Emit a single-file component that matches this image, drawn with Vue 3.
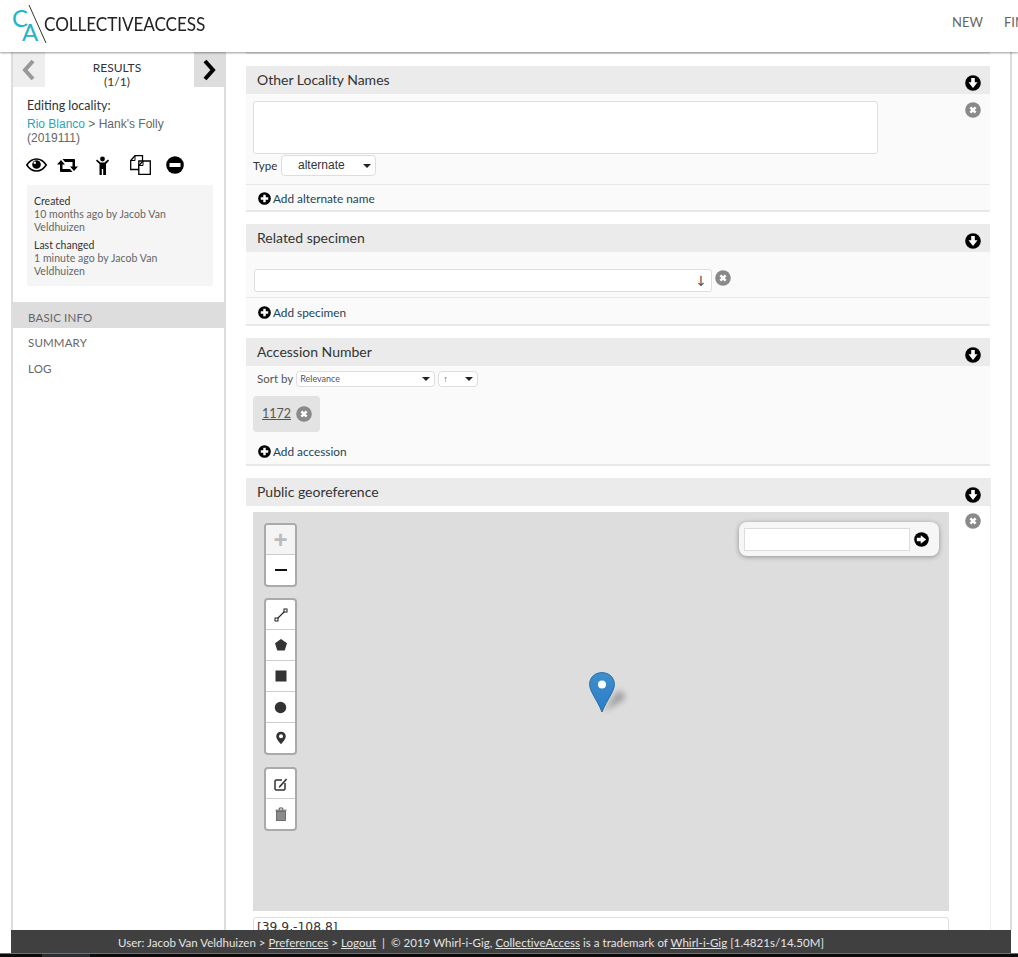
<template>
  <div class="page">
    <svg class="sprite" width="0" height="0">
      <defs>
        <symbol id="i-down" viewBox="0 0 16 16">
          <circle cx="8" cy="8" r="7.8" fill="#000" />
          <path d="M6.200 3h3.600v4.200h2.700L8 13 3.500 7.200h2.700z" fill="#fff" />
        </symbol>
        <symbol id="i-right" viewBox="0 0 16 16">
          <circle cx="8" cy="8" r="7.800" fill="#000" />
          <path d="M3 6.200h4.200V3.500L13 8l-5.800 4.500V9.800H3z" fill="#fff" />
        </symbol>
        <symbol id="i-x" viewBox="0 0 16 16">
          <circle cx="8" cy="8" r="7.800" fill="#8a8a8a" />
          <path d="M5.400 5.400l5.200 5.200M10.600 5.400l-5.200 5.200" stroke="#fff" stroke-width="2.600" fill="none" />
        </symbol>
        <symbol id="i-plus" viewBox="0 0 16 16">
          <circle cx="8" cy="8" r="7.800" fill="#000" />
          <path d="M8 3.400v9.200M3.400 8h9.200" stroke="#fff" stroke-width="3" fill="none" />
        </symbol>
      </defs>
    </svg>

    <header class="topbar">
      <svg class="logo" width="38" height="42" viewBox="0 0 38 42">
        <text x="0" y="22" class="logo-letter">C</text>
        <text x="10" y="36" class="logo-letter">A</text>
        <line x1="17" y1="0" x2="34" y2="38" stroke="#333" stroke-width="1" />
      </svg>
      <span class="brand">COLLECTIVEACCESS</span>
      <nav class="topnav">
        <span>NEW</span>
        <span>FIND</span>
      </nav>
    </header>

    <div class="layout">
      <aside class="sidebar">
        <div class="pager">
          <div class="pager-btn prev">
            <svg width="16" height="22" viewBox="0 0 16 22"><path d="M12 2L4 11l8 9" fill="none" stroke="#999" stroke-width="4" /></svg>
          </div>
          <div class="pager-label">RESULTS<br />(1/1)</div>
          <div class="pager-btn next">
            <svg width="16" height="22" viewBox="0 0 16 22"><path d="M4 2l8 9-8 9" fill="none" stroke="#000" stroke-width="4" /></svg>
          </div>
        </div>

        <div class="editing">
          <div class="editing-title">Editing locality:</div>
          <div class="editing-path"><a>Rio Blanco</a> &gt; Hank's Folly (2019111)</div>
        </div>

        <div class="tools">
          <svg width="21" height="14" viewBox="0 0 21 14">
            <path d="M.8 7C3.400 3 6.600 1 10.500 1s7.100 2 9.700 6c-2.600 4-5.800 6-9.700 6S3.400 11 .8 7z" fill="none" stroke="#000" stroke-width="1.500" />
            <circle cx="10.500" cy="6.500" r="4.300" fill="#000" />
            <circle cx="8.800" cy="4.800" r="1.200" fill="#fff" />
          </svg>
          <svg class="tool-retweet" width="21" height="15" viewBox="0 0 21 15">
            <path d="M4 2l4 4.500H5.500V11H13l2.500 3H4c-.6 0-1-.4-1-1V6.500H0zM17 13l-4-4.500h2.500V4H8L5.500 1H17c.6 0 1 .4 1 1v6.500h3z" fill="#000" />
          </svg>
          <svg class="tool-person" width="13" height="19" viewBox="0 0 13 19">
            <circle cx="6.500" cy="3" r="2.400" fill="#000" />
            <path d="M1 3.500l3.500 3h4l3.500-3 1 1.200-3 3.300V19H7.200v-6H5.800v6H3.500V8L0 4.700z" fill="#000" />
          </svg>
          <svg class="tool-copy" width="21" height="20" viewBox="0 0 21 20">
            <path d="M5 .7h7.500V6H8.800v8.500H.7V5.500z" fill="#fff" stroke="#000" stroke-width="1.300" />
            <path d="M5 .7v4.800H.7" fill="none" stroke="#000" stroke-width="1" />
            <path d="M13 6h7.300v13.300H8.800v-8.800z" fill="#fff" stroke="#000" stroke-width="1.300" />
            <path d="M13 6v4.500H8.800" fill="none" stroke="#000" stroke-width="1" />
          </svg>
          <svg class="tool-minus" width="18" height="18" viewBox="0 0 18 18">
            <circle cx="9" cy="9" r="8.800" fill="#000" />
            <rect x="3.500" y="7" width="11" height="4" fill="#fff" />
          </svg>
        </div>

        <div class="changes">
          <template v-for="item in changes" :key="item.label">
            <div class="changes-label">{{ item.label }}</div>
            <div class="changes-text">{{ item.text }}</div>
          </template>
        </div>

        <ul class="sidenav">
          <li class="active">BASIC INFO</li>
          <li>SUMMARY</li>
          <li>LOG</li>
        </ul>
      </aside>

      <main class="content">
        <div class="bundle-end"></div>

        <section class="bundle">
          <div class="bundle-head">
            <span>Other Locality Names</span>
            <svg class="icon-16"><use href="#i-down" /></svg>
          </div>
          <div class="bundle-body names">
            <div class="names-fields">
              <div class="field names-text"></div>
              <div class="type-row">
                <label>Type</label>
                <div class="select type-select">alternate</div>
              </div>
            </div>
            <svg class="icon-16 names-remove"><use href="#i-x" /></svg>
          </div>
          <div class="bundle-foot">
            <svg class="icon-13"><use href="#i-plus" /></svg>
            <a>Add alternate name</a>
          </div>
        </section>

        <section class="bundle">
          <div class="bundle-head">
            <span>Related specimen</span>
            <svg class="icon-16"><use href="#i-down" /></svg>
          </div>
          <div class="bundle-body specimen">
            <div class="field specimen-input"><span class="specimen-arrow">↓</span></div>
            <svg class="icon-16 specimen-remove"><use href="#i-x" /></svg>
          </div>
          <div class="bundle-foot">
            <svg class="icon-13"><use href="#i-plus" /></svg>
            <a>Add specimen</a>
          </div>
        </section>

        <section class="bundle">
          <div class="bundle-head">
            <span>Accession Number</span>
            <svg class="icon-16"><use href="#i-down" /></svg>
          </div>
          <div class="bundle-body accession">
            <div class="sort-row">
              <label>Sort by</label>
              <div class="select sort-select">Relevance</div>
              <div class="select dir-select">↑</div>
            </div>
            <div class="chip">
              <u>1172</u>
              <svg class="icon-16"><use href="#i-x" /></svg>
            </div>
          </div>
          <div class="bundle-foot plain">
            <svg class="icon-13"><use href="#i-plus" /></svg>
            <a>Add accession</a>
          </div>
        </section>

        <section class="bundle geo">
          <div class="bundle-head">
            <span>Public georeference</span>
            <svg class="icon-16"><use href="#i-down" /></svg>
          </div>
          <div class="geo-body">
            <div class="geo-fields">
              <div class="map">
                <div class="map-controls">
                  <div class="ctl-group">
                    <div class="ctl zoom-in">+</div>
                    <div class="ctl"><span class="zoom-out"></span></div>
                  </div>
                  <div class="ctl-group">
                    <div class="ctl">
                      <svg width="14" height="14" viewBox="0 0 14 14">
                        <path d="M3 11l8-8" stroke="#222" stroke-width="1.100" />
                        <rect x="1" y="10" width="3" height="3" fill="#fff" stroke="#222" />
                        <rect x="10" y="1" width="3" height="3" fill="#fff" stroke="#222" />
                      </svg>
                    </div>
                    <div class="ctl">
                      <svg width="14" height="14" viewBox="0 0 14 14"><path d="M7 1l6 4.300-2.300 7.200H3.300L1 5.300z" fill="#333" /></svg>
                    </div>
                    <div class="ctl">
                      <svg width="12" height="12" viewBox="0 0 12 12"><rect width="11" height="11" x=".5" y=".5" fill="#333" /></svg>
                    </div>
                    <div class="ctl">
                      <svg width="13" height="13" viewBox="0 0 13 13"><circle cx="6.500" cy="6.500" r="5.700" fill="#333" /></svg>
                    </div>
                    <div class="ctl">
                      <svg width="12" height="14" viewBox="0 0 12 14">
                        <path d="M6 .7c2.800 0 4.800 2 4.800 4.600 0 2.800-2.500 5-4.800 8-2.300-3-4.800-5.200-4.800-8C1.200 2.700 3.200.7 6 .7z" fill="#333" />
                        <circle cx="6" cy="5.300" r="2" fill="#fff" />
                      </svg>
                    </div>
                  </div>
                  <div class="ctl-group">
                    <div class="ctl">
                      <svg width="14" height="14" viewBox="0 0 14 14">
                        <path d="M8 3H2.200C1.500 3 1 3.500 1 4.200v7.600c0 .7.500 1.200 1.200 1.200h7.600c.7 0 1.200-.5 1.200-1.200V6" fill="none" stroke="#333" stroke-width="1.500" />
                        <path d="M5 9.300L12 1.500l1.200 1.100L6.300 10.200 4.800 10.700z" fill="#333" />
                      </svg>
                    </div>
                    <div class="ctl">
                      <svg width="12" height="14" viewBox="0 0 12 14">
                        <path d="M.5 3.200h11M4.300 3V1h3.400v2" fill="none" stroke="#555" stroke-width="1" />
                        <rect x="1.500" y="4.500" width="9" height="9" fill="#8c8c8c" stroke="#555" stroke-width=".8" />
                      </svg>
                    </div>
                  </div>
                </div>

                <div class="map-search">
                  <div class="search-input"></div>
                  <svg class="icon-15"><use href="#i-right" /></svg>
                </div>

                <svg class="pin" width="48" height="44" viewBox="0 0 48 44">
                  <defs>
                    <linearGradient id="pin-fill" x1="0" y1="0" x2="0" y2="1">
                      <stop offset="0" stop-color="#3f8fcc" />
                      <stop offset="1" stop-color="#2a7dc8" />
                    </linearGradient>
                    <filter id="pin-blur" x="-50%" y="-50%" width="200%" height="200%"><feGaussianBlur stdDeviation="3" /></filter>
                  </defs>
                  <path d="M14 40l20-12c3-3 2-8-5-9z" fill="#000" opacity=".3" filter="url(#pin-blur)" />
                  <path d="M13 .6C5.800.6.600 5.700.6 12.400c0 7 7.800 15.800 12.400 27.600C17.600 28.200 25.400 19.400 25.400 12.400 25.400 5.700 20.200.6 13 .6z" fill="url(#pin-fill)" stroke="#2a6fa8" />
                  <circle cx="13" cy="12.600" r="4" fill="#fff" />
                </svg>
              </div>
              <div class="field coords">[39.9,-108.8]</div>
            </div>
            <svg class="icon-16 geo-remove"><use href="#i-x" /></svg>
          </div>
        </section>
      </main>
    </div>

    <footer class="footer">
      User: Jacob Van Veldhuizen &gt; <u>Preferences</u> &gt; <u>Logout</u> &nbsp;|&nbsp; © 2019 Whirl-i-Gig, <u>CollectiveAccess</u> is a trademark of <u>Whirl-i-Gig</u> [1.4821s/14.50M]
    </footer>
    <div class="taskbar"><span class="task-item"></span></div>
  </div>
</template>

<script setup>
const changes = [
  { label: 'Created', text: '10 months ago by Jacob Van Veldhuizen' },
  { label: 'Last changed', text: '1 minute ago by Jacob Van Veldhuizen' },
]
</script>

<style>
html,
body {
  margin: 0;
  background: #fff;
}
</style>

<style scoped>
.page {
  position: relative;
  display: flex;
  flex-direction: column;
  width: 1018px;
  height: 957px;
  overflow: hidden;
  background: #fff;
  font-family: Lato, 'Liberation Sans', sans-serif;
  color: #333;
}

.sprite {
  position: absolute;
}

.icon-16 {
  width: 16px;
  height: 16px;
  flex: none;
}

.icon-15 {
  width: 15px;
  height: 15px;
  flex: none;
}

.icon-13 {
  width: 13px;
  height: 13px;
  flex: none;
}

.topbar {
  position: relative;
  z-index: 2;
  display: flex;
  align-items: center;
  flex: none;
  height: 52px;
  padding-left: 12px;
  background: #fff;
  box-shadow: 0 1px 2px rgba(0, 0, 0, 0.4);
  white-space: nowrap;
}

.logo {
  flex: none;
  align-self: flex-start;
  margin-top: 5px;
  margin-right: -6px;
}

.logo-letter {
  font-family: Lato, sans-serif;
  font-size: 24px;
  font-weight: 400;
  fill: #22b5c4;
}

.brand {
  width: 161px;
  margin-top: -6px;
  font-size: 19.500px;
  letter-spacing: -0.1px;
  color: #222;
  transform: scaleX(0.88);
  transform-origin: left center;
}

.topnav {
  display: flex;
  gap: 21px;
  margin-left: 747px;
  margin-top: -8px;
  font-size: 13px;
  color: #666;
}

.layout {
  display: flex;
  flex: none;
  height: 878px;
  margin-left: 11px;
  overflow: hidden;
}

.sidebar {
  flex: none;
  width: 211px;
  border-left: 2px solid #ddd;
  border-right: 2px solid #ddd;
}

.pager {
  display: flex;
  height: 35px;
}

.pager-btn {
  display: flex;
  align-items: center;
  justify-content: center;
  flex: none;
}

.pager-btn.prev {
  width: 32px;
  background: #eee;
}

.pager-btn.next {
  width: 30px;
  background: #ddd;
}

.pager-label {
  flex: 1;
  padding-top: 9px;
  padding-right: 5px;
  text-align: center;
  font-size: 12px;
  line-height: 14px;
  color: #333;
}

.editing {
  padding: 12px 14px 0;
}

.editing-title {
  font-size: 12.500px;
  line-height: 14px;
  color: #333;
}

.editing-path {
  margin-top: 4px;
  font-family: 'Liberation Sans', sans-serif;
  font-size: 12px;
  line-height: 14px;
  color: #666;
}

.editing-path a {
  color: #2aa5bd;
}

.tools {
  display: flex;
  align-items: center;
  height: 20px;
  margin-top: 10px;
  padding-left: 13px;
}

.tool-retweet {
  margin-left: 10px;
}

.tool-person {
  margin-left: 18px;
}

.tool-copy {
  margin-left: 21px;
}

.tool-minus {
  margin-left: 15px;
}

.changes {
  width: 172px;
  height: 93px;
  margin: 10px 0 0 14px;
  padding: 8px 7px 0;
  background: #f5f5f5;
}

.changes-label {
  margin-top: 5px;
  font-size: 10.500px;
  line-height: 13px;
  color: #333;
}

.changes-label:first-child {
  margin-top: 2px;
}

.changes-text {
  font-size: 10.500px;
  line-height: 13px;
  letter-spacing: 0.05px;
  color: #666;
}

.sidenav {
  list-style: none;
  margin: 16px 0 0;
  padding: 0;
  font-size: 11.500px;
  letter-spacing: 0.15px;
  color: #666;
}

.sidenav li {
  height: 26px;
  padding-left: 15px;
  line-height: 29px;
}

.sidenav li.active {
  line-height: 31px;
  background: #ddd;
  overflow: hidden;
}

.content {
  flex: none;
  width: 786px;
  padding-left: 20px;
  box-sizing: border-box;
  border-right: 2px solid #ddd;
}

.bundle-end {
  width: 744px;
  height: 2px;
  margin-bottom: 12px;
  background: #e8e8e8;
}

.bundle {
  width: 744px;
  margin-bottom: 12px;
  background: #fafafa;
  border-bottom: 2px solid #e8e8e8;
}

.bundle-head {
  display: flex;
  align-items: center;
  justify-content: space-between;
  height: 28px;
  padding: 0 9px 0 11px;
  background: #ebebeb;
  font-size: 14px;
  color: #333;
}

.bundle-head span {
  margin-top: -2px;
}

.bundle-head svg {
  margin-top: 5px;
}

.bundle-body {
  display: flex;
}

.names {
  justify-content: space-between;
  height: 91px;
  padding: 7px 9px 0 7px;
  box-sizing: border-box;
  border-bottom: 1px solid #e8e8e8;
}

.names-remove {
  margin-top: 1px;
}

.field {
  box-sizing: border-box;
  background: #fff;
  border: 1px solid #ddd;
  border-radius: 3px;
}

.names-text {
  width: 625px;
  height: 53px;
}

.type-row {
  display: flex;
  align-items: center;
  gap: 4px;
  margin-top: 1px;
  font-size: 11.500px;
}

.type-row label {
  width: 24px;
}

.select {
  position: relative;
  box-sizing: border-box;
  background: #fff;
  border: 1px solid #ddd;
  border-radius: 4px;
  font-family: 'Liberation Sans', sans-serif;
}

.select::after {
  content: '';
  position: absolute;
  right: 4px;
  top: 50%;
  margin-top: -2px;
  border: 4px solid transparent;
  border-top-color: #222;
  border-bottom-width: 0;
}

.type-select {
  width: 95px;
  height: 21px;
  padding-left: 16px;
  font-size: 12px;
  line-height: 19px;
  color: #333;
}

.bundle-foot {
  display: flex;
  align-items: center;
  gap: 2px;
  height: 25px;
  padding: 1px 0 0 12px;
  box-sizing: border-box;
  font-size: 11.800px;
  color: #1c4456;
}

.specimen {
  align-items: flex-start;
  gap: 3px;
  height: 46px;
  padding: 17px 0 0 8px;
  box-sizing: border-box;
  border-bottom: 1px solid #e8e8e8;
}

.specimen + .bundle-foot {
  height: 26px;
  padding-top: 3px;
}

.specimen-input {
  width: 458px;
  height: 23px;
  text-align: right;
}

.specimen-remove {
  margin-top: 1px;
}

.specimen-arrow {
  padding-right: 4px;
  font-family: 'DejaVu Sans', sans-serif;
  font-size: 14px;
  line-height: 23px;
  color: #555;
}

.accession {
  flex-direction: column;
  height: 72px;
  padding: 5px 0 0 7px;
  box-sizing: border-box;
}

.sort-row {
  display: flex;
  align-items: center;
  gap: 3px;
  font-size: 11.500px;
  color: #555;
}

.sort-row label {
  margin: -2px 0 0 4px;
}

.sort-select {
  width: 139px;
  height: 16px;
  padding-left: 3px;
  font-family: Lato, sans-serif;
  font-size: 9px;
  line-height: 14px;
}

.dir-select {
  width: 40px;
  height: 16px;
  padding-left: 4px;
  font-size: 9px;
  line-height: 14px;
}

.chip {
  display: flex;
  align-items: center;
  gap: 5px;
  width: 67px;
  height: 36px;
  margin-top: 9px;
  padding: 0 0 1px 9px;
  box-sizing: border-box;
  background: #e3e3e3;
  border-radius: 4px;
  font-size: 12.500px;
  color: #555;
}

.bundle-foot.plain {
  height: 26px;
  padding-top: 0;
}

.geo {
  background: #fff;
  border-right: 1px solid #eee;
}

.geo-body {
  display: flex;
  justify-content: space-between;
  padding: 6px 9px 0 7px;
}

.geo-remove {
  margin-top: 1px;
}

.map {
  position: relative;
  width: 696px;
  height: 399px;
  background: #ddd;
}

.map-controls {
  position: absolute;
  left: 11px;
  top: 11px;
  display: flex;
  flex-direction: column;
  gap: 11px;
}

.ctl-group {
  width: 29px;
  background: #fff;
  border: 2px solid #aaa;
  border-radius: 4px;
}

.ctl-group:last-child {
  margin-top: 1px;
}

.ctl {
  display: flex;
  align-items: center;
  justify-content: center;
  height: 30px;
  border-top: 1px solid #ccc;
}

.ctl:first-child {
  height: 29px;
  border-top: 0;
  border-radius: 2px 2px 0 0;
}

.zoom-in {
  background: #f4f4f4;
  color: #bbb;
  font-family: 'Liberation Sans', sans-serif;
  font-size: 24px;
  font-weight: 700;
}

.zoom-out {
  display: block;
  width: 12px;
  height: 2px;
  background: #111;
}

.map-search {
  position: absolute;
  right: 10px;
  top: 10px;
  display: flex;
  align-items: center;
  gap: 4px;
  width: 200px;
  height: 34px;
  padding-left: 5px;
  box-sizing: border-box;
  background: #f6f6f6;
  border-radius: 8px;
  box-shadow: 0 1px 5px rgba(0, 0, 0, 0.35);
}

.search-input {
  width: 166px;
  height: 23px;
  box-sizing: border-box;
  background: #fff;
  border: 1px solid #ddd;
}

.pin {
  position: absolute;
  left: 336px;
  top: 160px;
}

.coords {
  height: 40px;
  margin-top: 6px;
  padding: 2px 3px;
  font-family: 'DejaVu Sans', sans-serif;
  font-size: 12.300px;
  color: #333;
}

.footer {
  position: absolute;
  left: 11px;
  top: 930px;
  z-index: 3;
  width: 1000px;
  height: 23px;
  padding-left: 107px;
  box-sizing: border-box;
  background: #404040;
  font-size: 11.500px;
  letter-spacing: 0.03px;
  line-height: 25px;
  color: #e4e4e4;
  white-space: nowrap;
}

.taskbar {
  position: absolute;
  left: 0;
  top: 953px;
  width: 100%;
  height: 4px;
  background: #0b0b0b;
  border-top: 1px solid #3d7fa8;
  box-sizing: border-box;
}

.task-item {
  display: block;
  width: 48px;
  height: 3px;
  margin-left: 42px;
  background: #2b2f33;
}
</style>
